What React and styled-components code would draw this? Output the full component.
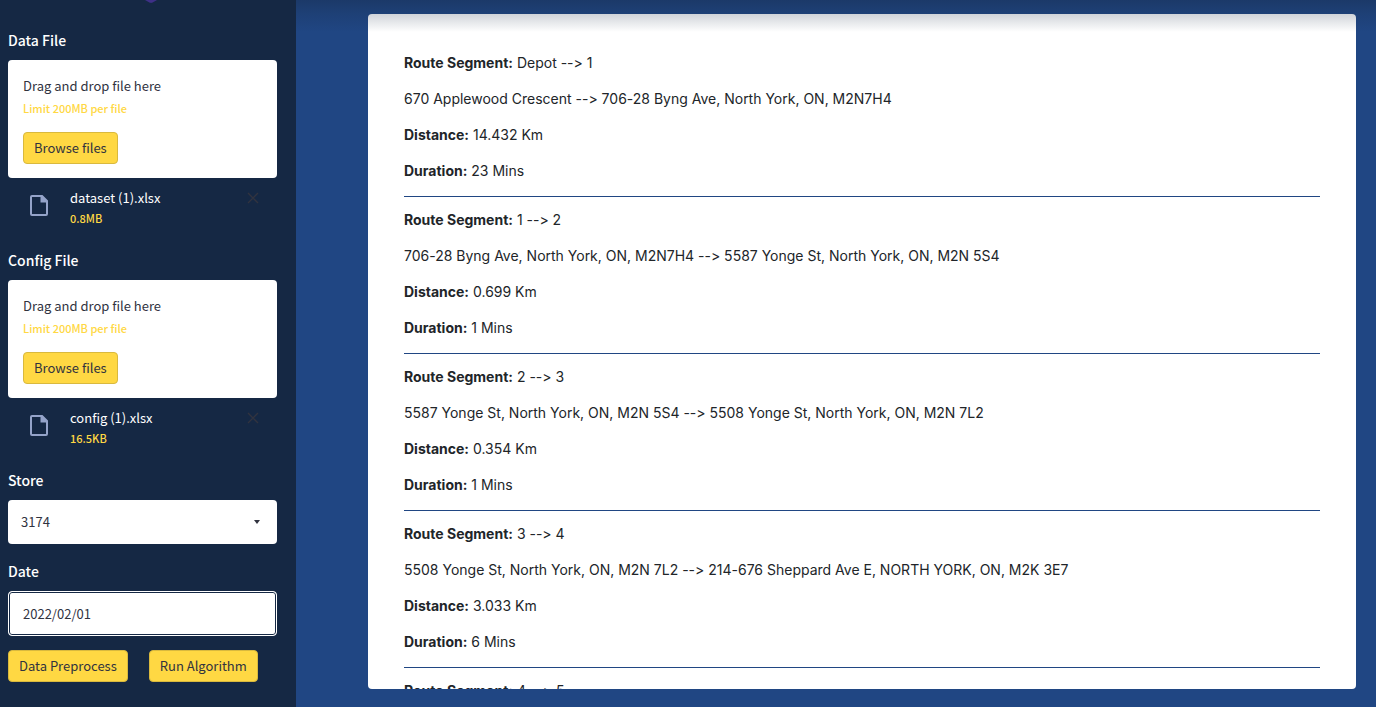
import React from 'react';
import styled, { createGlobalStyle } from 'styled-components';

const uiFont = '"Noto Sans CJK SC", "Noto Sans", sans-serif';
const navy = '#152844';
const ink = '#31333f';
const yellow = '#ffd843';

const GlobalStyle = createGlobalStyle`
  *, *::before, *::after { box-sizing: border-box; }
  body { margin: 0; background: #204683; }
`;

const Page = styled.div`
  position: relative;
  display: flex;
  height: 100vh;
  overflow: hidden;
  background: #204683;
`;

const TopShade = styled.div`
  position: absolute;
  inset: 0 0 auto;
  height: 32px;
  pointer-events: none;
  background: linear-gradient(rgba(21, 40, 68, 0.42), rgba(21, 40, 68, 0.2) 14px, rgba(21, 40, 68, 0));
`;

const Sidebar = styled.aside`
  flex: 0 0 296px;
  display: flex;
  flex-direction: column;
  padding: 0 19px 0 8px;
  background: ${navy};
  color: #fff;
  font-family: ${uiFont};
  font-size: 13px;
  line-height: 20px;
`;

const Logo = styled.svg`
  display: block;
  height: 3px;
  width: 14px;
  margin: 0 0 27px 136px;
`;

const Field = styled.section`
  display: flex;
  flex-direction: column;
  margin-bottom: ${(p) => p.$gap}px;
`;

const Label = styled.label`
  font-size: 14px;
  line-height: 20px;
  font-weight: 500;
  margin-bottom: 10px;
`;

const Dropzone = styled.div`
  display: flex;
  flex-direction: column;
  align-items: flex-start;
  padding: 16px 15px 14px;
  border-radius: 4px;
  background: #fff;
  color: ${ink};
`;

const Hint = styled.small`
  margin: 2px 0 14px;
  color: ${yellow};
  font-size: 11px;
  font-weight: 500;
  line-height: 20px;
`;

const Button = styled.button`
  height: 32px;
  padding: 0 10px 1px;
  border: 1px solid #d9b93e;
  border-radius: 4px;
  background: ${yellow};
  color: ${ink};
  font: 400 13px/20px ${uiFont};
  white-space: nowrap;
  cursor: pointer;
`;

const FileRow = styled.div`
  display: flex;
  align-items: flex-start;
  padding: 10px 18px 0 22px;
`;

const FileIcon = styled.svg`
  width: 18px;
  height: 21px;
  margin: 7px 22px 0 0;
  fill: #94a3c9;
`;

const FileInfo = styled.div`
  flex: 1;
  display: flex;
  flex-direction: column;
`;

const FileSize = styled.small`
  color: ${yellow};
  font-size: 11px;
  font-weight: 500;
  line-height: 20px;
`;

const Remove = styled.button`
  display: flex;
  padding: 4px 0;
  border: 0;
  background: none;
  color: #31333f;
  cursor: pointer;
`;

const SelectBox = styled.div`
  display: grid;
  align-items: center;
  > * { grid-area: 1 / 1; }
`;

const Select = styled.select`
  appearance: none;
  width: 100%;
  height: 44px;
  padding: 0 13px;
  border: 0;
  border-radius: 4px;
  background: #fff;
  color: ${ink};
  font: 400 13px/20px ${uiFont};
`;

const Caret = styled.svg`
  justify-self: end;
  width: 8px;
  height: 4px;
  margin-right: 16px;
  fill: ${ink};
  pointer-events: none;
`;

const DateInput = styled.input`
  width: 100%;
  height: 45px;
  padding: 0 14px;
  border: 1px solid #fff;
  border-radius: 4px;
  box-shadow: inset 0 0 0 1px ${navy};
  background: #fff;
  color: ${ink};
  font: 400 13px/20px ${uiFont};
`;

const Actions = styled.div`
  display: flex;
  gap: 21px;
`;

const Main = styled.main`
  flex: 1;
  min-width: 0;
  display: flex;
  padding: 14px 20px 18px 72px;
`;

const Card = styled.div`
  flex: 1;
  min-width: 0;
  overflow: hidden;
  padding: 39px 36px 0;
  border-radius: 4px;
  background: #fff;
  color: #212529;
  font: 400 14px/20px Inter, sans-serif;
  font-feature-settings: "calt" 0;
`;

const Segment = styled.article`
  display: flex;
  flex-direction: column;
  gap: 16px;
  padding-bottom: 15px;
  margin-bottom: 13px;
  border-bottom: 1px solid #204683;
`;

const Line = styled.p`
  margin: 0;
`;

const segments = [
  ['Depot --> 1', '670 Applewood Crescent --> 706-28 Byng Ave, North York, ON, M2N7H4', '14.432 Km', '23 Mins'],
  ['1 --> 2', '706-28 Byng Ave, North York, ON, M2N7H4 --> 5587 Yonge St, North York, ON, M2N 5S4', '0.699 Km', '1 Mins'],
  ['2 --> 3', '5587 Yonge St, North York, ON, M2N 5S4 --> 5508 Yonge St, North York, ON, M2N 7L2', '0.354 Km', '1 Mins'],
  ['3 --> 4', '5508 Yonge St, North York, ON, M2N 7L2 --> 214-676 Sheppard Ave E, NORTH YORK, ON, M2K 3E7', '3.033 Km', '6 Mins'],
];

function Uploader({ id, label, file, size }) {
  return (
    <Field $gap={22}>
      <Label htmlFor={id}>{label}</Label>
      <Dropzone>
        <span>Drag and drop file here</span>
        <Hint>Limit 200MB per file</Hint>
        <Button id={id} type="button">Browse files</Button>
      </Dropzone>
      <FileRow>
        <FileIcon viewBox="0 0 18 21" aria-hidden="true">
          <path fillRule="evenodd" d="M2 0H12.5L18 5.5V19a2 2 0 0 1-2 2H2a2 2 0 0 1-2-2V2a2 2 0 0 1 2-2zM2 2V19H16V7.5H10.5V2z" />
        </FileIcon>
        <FileInfo>
          <span>{file}</span>
          <FileSize>{size}</FileSize>
        </FileInfo>
        <Remove type="button" aria-label={`Remove ${file}`}>
          <svg width="12" height="12" viewBox="0 0 12 12" stroke="currentColor" strokeWidth="1.4" aria-hidden="true">
            <path d="M1 1l10 10M11 1L1 11" />
          </svg>
        </Remove>
      </FileRow>
    </Field>
  );
}

export default function App() {
  return (
    <Page>
      <GlobalStyle />
      <Sidebar>
        <Logo viewBox="0 0 14 3" aria-hidden="true">
          <path d="M1 0h12L9 2.2q-2 1.2-4 0z" fill="#5a35b5" />
        </Logo>
        <Uploader id="data-file" label="Data File" file="dataset (1).xlsx" size="0.8MB" />
        <Uploader id="config-file" label="Config File" file="config (1).xlsx" size="16.5KB" />
        <Field $gap={17}>
          <Label htmlFor="store">Store</Label>
          <SelectBox>
            <Select id="store" defaultValue="3174">
              <option>3174</option>
            </Select>
            <Caret viewBox="0 0 8 4" aria-hidden="true"><path d="M1 0h6L4 4z" /></Caret>
          </SelectBox>
        </Field>
        <Field $gap={14}>
          <Label htmlFor="date">Date</Label>
          <DateInput id="date" type="text" defaultValue="2022/02/01" />
        </Field>
        <Actions>
          <Button type="button">Data Preprocess</Button>
          <Button type="button">Run Algorithm</Button>
        </Actions>
      </Sidebar>
      <Main>
        <Card>
          {segments.map(([route, path, distance, duration]) => (
            <Segment key={route}>
              <Line><strong>Route Segment:</strong> {route}</Line>
              <Line>{path}</Line>
              <Line><strong>Distance:</strong> {distance}</Line>
              <Line><strong>Duration:</strong> {duration}</Line>
            </Segment>
          ))}
          <Line><strong>Route Segment:</strong> 4 --&gt; 5</Line>
        </Card>
      </Main>
      <TopShade />
    </Page>
  );
}
